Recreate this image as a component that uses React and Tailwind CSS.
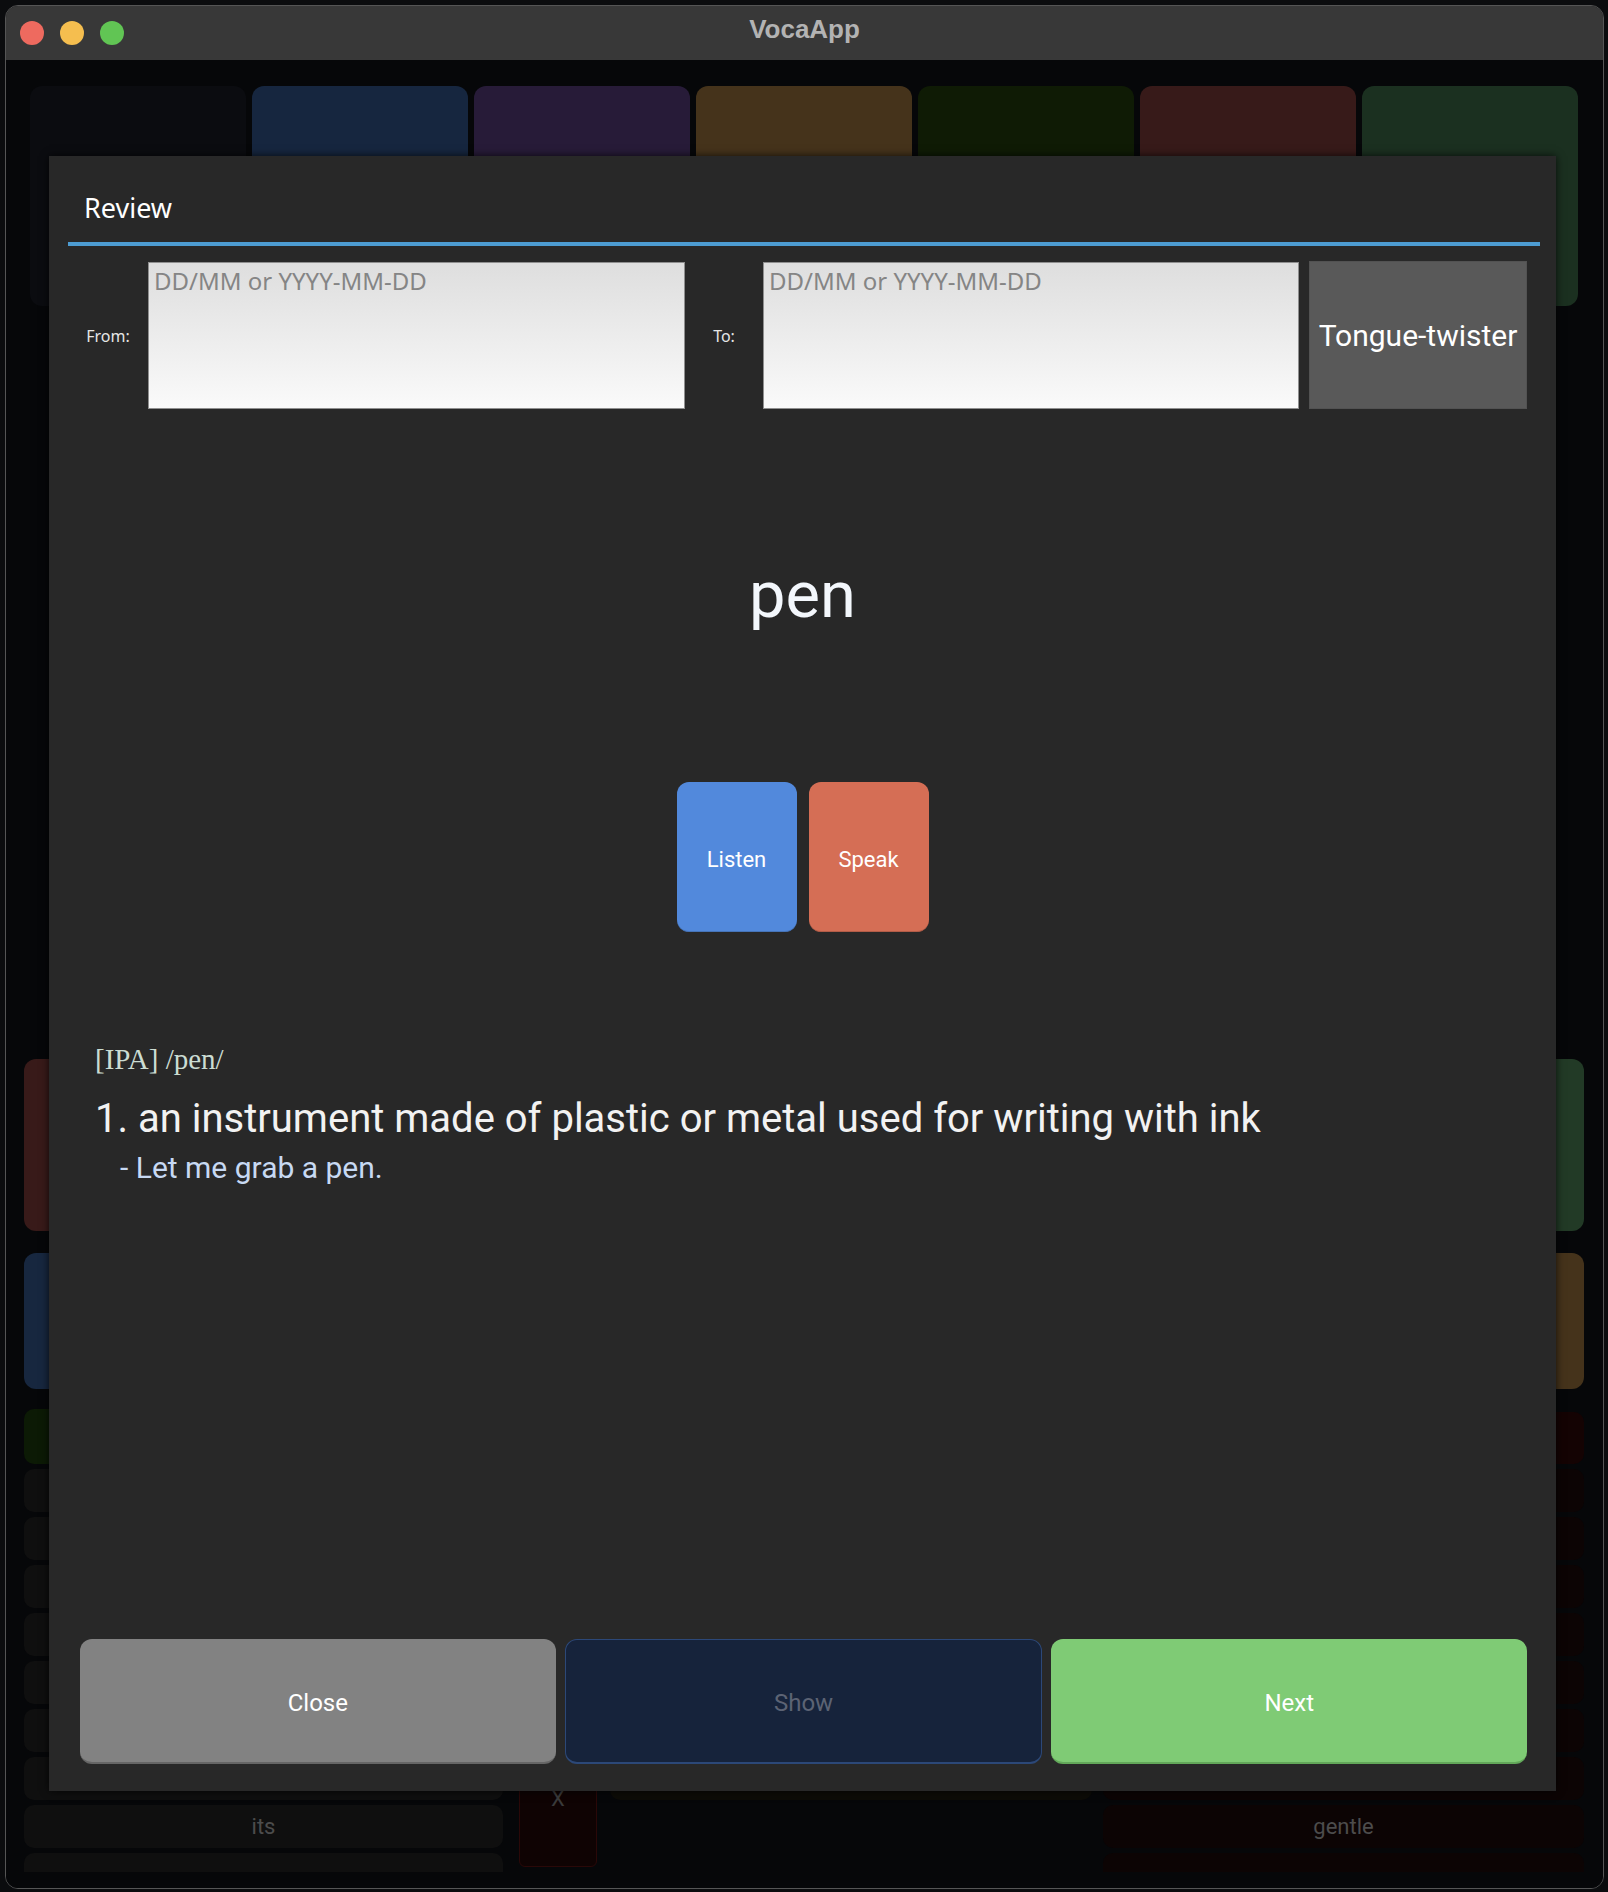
const TOP_TILES = [
  "#0b0c10",
  "#16263f",
  "#271b38",
  "#45331b",
  "#0f1b05",
  "#371a19",
  "#1b3020",
];

function Rows({ color, label, textColor }) {
  return (
    <div className="mt-[5px] flex flex-col gap-[5px]">
      {Array.from({ length: 9 }).map((_, i) => (
        <div
          key={i}
          className={`flex h-[43px] shrink-0 items-center justify-center rounded-[10px] font-['Roboto',sans-serif] text-[22px] ${color} ${textColor}`}
        >
          {i === 7 ? label : ""}
        </div>
      ))}
    </div>
  );
}

function Background() {
  return (
    <div className="flex flex-col">
      {/* top category tiles */}
      <div className="flex gap-[6px] pl-[24px] pt-[26px]">
        {TOP_TILES.map((c) => (
          <div
            key={c}
            className="h-[220px] w-[216px] rounded-[12px]"
            style={{ backgroundColor: c }}
          />
        ))}
      </div>

      {/* lower word lists */}
      <div className="ml-[18px] mt-[753px] flex h-[813px] items-start overflow-hidden">
        <div className="flex w-[479px] flex-col">
          <div className="h-[172px] rounded-[12px] bg-[#381a19]" />
          <div className="mt-[22px] h-[136px] rounded-[12px] bg-[#17273f]" />
          <div className="mt-[20px] h-[55px] rounded-[10px] bg-[#0c1a05]" />
          <Rows color="bg-[#0f0f0f]" label="its" textColor="text-[#4c4c4c]" />
        </div>
        <div className="ml-[16px] mt-[670px] flex h-[138px] w-[78px] items-center justify-center rounded-[6px] border border-[#2a0808] bg-[#0f0303] font-['Roboto',sans-serif] text-[22px] text-[#3a3a3a]">
          X
        </div>
        <div className="ml-[13px] mt-[410px] h-[331px] w-[482px] rounded-[10px] bg-[#0d0c07]" />
        <div className="ml-[11px] flex w-[481px] flex-col">
          <div className="h-[172px] rounded-[12px] bg-[#223a26]" />
          <div className="mt-[22px] h-[136px] rounded-[12px] bg-[#45331b]" />
          <div className="mt-[23px] h-[52px] rounded-[10px] bg-[#140303]" />
          <Rows color="bg-[#0c0404]" label="gentle" textColor="text-[#4c4c4c]" />
        </div>
      </div>
    </div>
  );
}

function DateInput({ width }) {
  return (
    <textarea
      readOnly
      placeholder="DD/MM or YYYY-MM-DD"
      className={`${width} mt-[1px] h-[147px] resize-none border border-[#8f8f8f] bg-gradient-to-b from-[#dedede] to-[#fafafa] px-[5px] py-[2px] font-['Noto_Sans',sans-serif] text-[24px] leading-[32px] text-[#333] outline-none placeholder:text-[#858585]`}
    />
  );
}

function ReviewModal() {
  return (
    <div className="absolute left-[43px] top-[96px] flex h-[1635px] w-[1507px] flex-col bg-[#282828] shadow-[0_0_8px_rgba(0,0,0,0.75)]">
      {/* Header */}
      <div className="flex h-[86px] items-center pl-[35px] pt-[18px]">
        <span className="font-['Noto_Sans',sans-serif] text-[27px] leading-[34px] text-white">
          Review
        </span>
      </div>
      <div className="ml-[19px] mr-[16px] h-[4px] bg-[#4d9cd2]" />

      {/* Date filter */}
      <div className="ml-[19px] mt-[15px] flex h-[148px]">
        <div className="flex w-[80px] items-center justify-center pt-[2px] font-['Noto_Sans',sans-serif] text-[16px] text-[#e6e6e6]">
          From:
        </div>
        <DateInput width="w-[537px]" />
        <div className="flex w-[78px] items-center justify-center pt-[2px] font-['Noto_Sans',sans-serif] text-[16px] text-[#e6e6e6]">
          To:
        </div>
        <DateInput width="w-[536px]" />
        <button className="ml-[10px] w-[218px] border border-[#525252] bg-[#595959] font-['Roboto',sans-serif] text-[30px] text-white">
          Tongue-twister
        </button>
      </div>

      {/* Word */}
      <div className="flex h-[373px] items-center justify-center">
        <span className="font-['Roboto',sans-serif] text-[65px] text-[#f3f7fc]">
          pen
        </span>
      </div>

      <div className="flex justify-center gap-[12px]">
        <button className="h-[150px] w-[120px] rounded-[12px] border-b border-[#4674b8] bg-[#5289dc] pt-[5px] font-['Roboto',sans-serif] text-[22px] text-white">
          Listen
        </button>
        <button className="h-[150px] w-[120px] rounded-[12px] border-b border-[#b35c47] bg-[#d56e55] pt-[5px] font-['Roboto',sans-serif] text-[22px] text-white">
          Speak
        </button>
      </div>

      {/* Meaning */}
      <div className="mt-[106px] flex flex-col pl-[46px]">
        <div className="font-['Liberation_Serif',serif] text-[29px] text-[#cbdcd2]">
          [IPA] /pen/
        </div>
        <div className="mt-[7px] font-['Roboto',sans-serif] text-[40px] text-[#f2f2f2]">
          1. an instrument made of plastic or metal used for writing with ink
        </div>
        <div className="-mt-[4px] pl-[25px] font-['Roboto',sans-serif] text-[30px] text-[#c7d9f3]">
          - Let me grab a pen.
        </div>
      </div>

      <div className="flex-1" />

      {/* Actions */}
      <div className="flex gap-[9px] pb-[27px] pl-[31px] pr-[29px]">
        <button className="h-[125px] flex-1 rounded-[12px] border-b-2 border-[#666] bg-[#828282] pt-[4px] font-['Roboto',sans-serif] text-[24px] text-white">
          Close
        </button>
        <button className="h-[125px] flex-1 rounded-[12px] border border-b-2 border-[#2c4878] bg-[#16233b] pt-[4px] font-['Roboto',sans-serif] text-[24px] text-[#5c6374]">
          Show
        </button>
        <button className="h-[125px] flex-1 rounded-[12px] border-b-2 border-[#63a85a] bg-[#7fcb75] pt-[4px] font-['Roboto',sans-serif] text-[24px] text-white">
          Next
        </button>
      </div>
    </div>
  );
}

export default function App() {
  return (
    <div className="h-[1892px] w-[1608px] overflow-hidden bg-[#0b0c0e] pl-[5px] pt-[5px]">
      <div className="flex h-[1884px] w-[1599px] flex-col overflow-hidden rounded-[13px] border border-[#555]">
        {/* Title bar */}
        <div className="flex h-[54px] shrink-0 items-center bg-[#383838] px-[14px]">
          <div className="flex flex-1 gap-[16px]">
            <span className="h-[24px] w-[24px] rounded-full bg-[#ee6a5f]" />
            <span className="h-[24px] w-[24px] rounded-full bg-[#f5be4f]" />
            <span className="h-[24px] w-[24px] rounded-full bg-[#61c554]" />
          </div>
          <span className="mb-[8px] font-['Liberation_Sans',sans-serif] text-[26px] font-bold text-[#b3b3b3]">
            VocaApp
          </span>
          <div className="flex-1" />
        </div>

        {/* Content */}
        <div className="relative flex-1 bg-[#060709]">
          <Background />
          <ReviewModal />
        </div>
      </div>
    </div>
  );
}
